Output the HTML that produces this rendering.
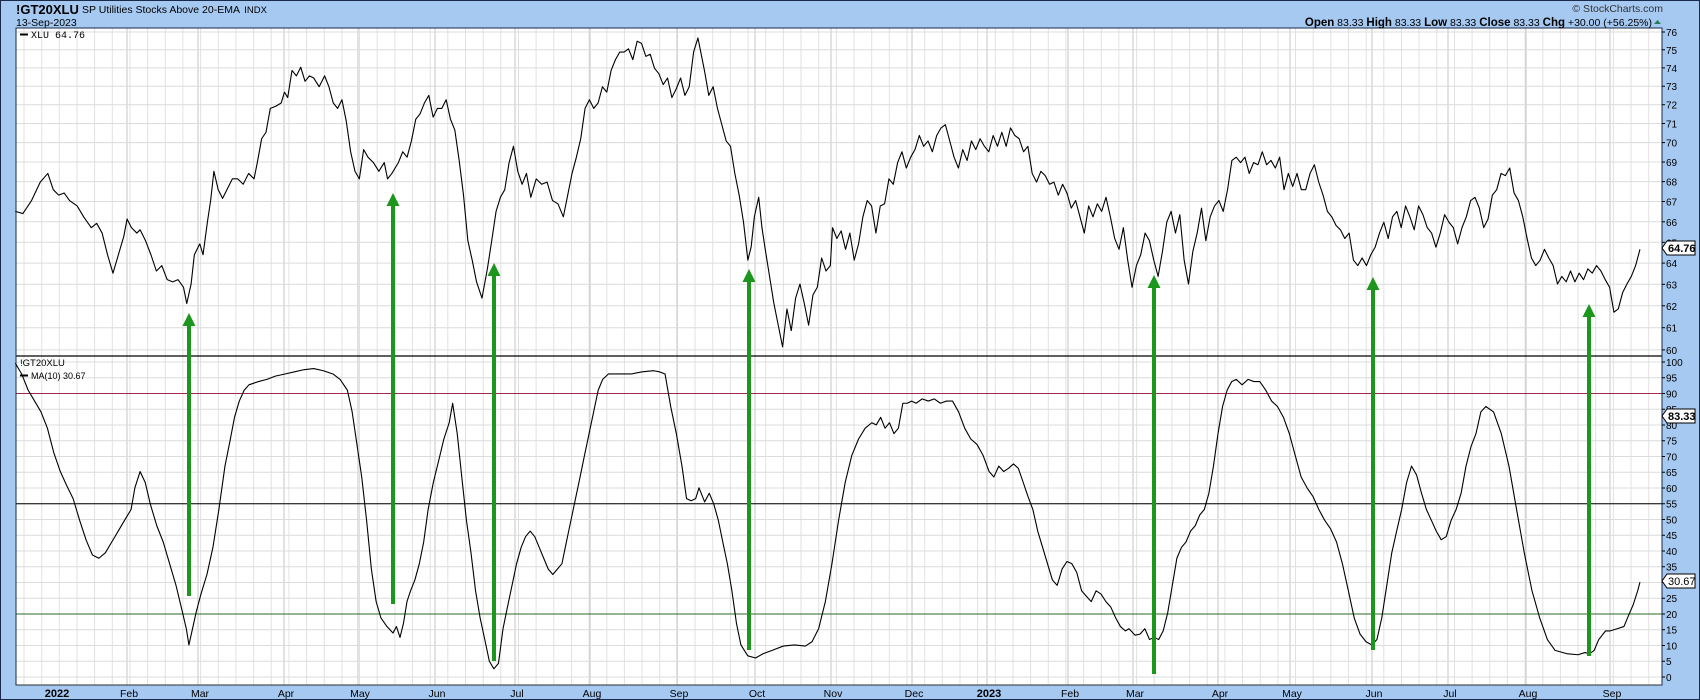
<!DOCTYPE html>
<html><head><meta charset="utf-8"><style>
html,body{margin:0;padding:0;background:#a6c9f2;}
svg{display:block;font-family:"Liberation Sans",Arial,sans-serif;}
</style></head><body>
<svg id="s" width="1700" height="700" viewBox="0 0 1700 700" xmlns="http://www.w3.org/2000/svg">
<rect x="0" y="0" width="1700" height="700" fill="#a6c9f2"/>
<rect x="0.5" y="0.5" width="1699" height="699" fill="none" stroke="#1a2a4a" stroke-width="1"/>
<rect x="16" y="28" width="1646" height="657" fill="#ffffff"/>
<g id="grid"></g>
<line x1="16" y1="356" x2="1662" y2="356" stroke="#000" stroke-width="1.2"/>
<line x1="16" y1="393.5" x2="1662" y2="393.5" stroke="#a0284c" stroke-width="1"/>
<line x1="16" y1="503.75" x2="1662" y2="503.75" stroke="#000" stroke-width="1"/>
<line x1="16" y1="614" x2="1662" y2="614" stroke="#2a6a2a" stroke-width="1"/>
<rect x="16" y="28" width="1646" height="657" fill="none" stroke="#1a2a4a" stroke-width="1"/>
<line x1="16" y1="685" x2="1662" y2="685" stroke="#333" stroke-width="1" stroke-dasharray="1,1"/>

<g transform="matrix(1.0853 0 0 1.084 -1 0)" fill="none" stroke="#000" stroke-width="1.1" stroke-linejoin="round">
<polyline vector-effect="non-scaling-stroke" points="15,195 22,197 30,185 38,168 45,160 50,175 55,180 60,178 65,185 72,190 78,200 85,210 90,206 95,215 100,235 105,252 110,235 115,218 118,202 122,210 127,215 130,212 135,222 140,235 145,250 150,245 155,258 160,260 165,258 170,265 173,280 177,262 180,235 185,225 188,235 192,205 195,185 198,158 202,175 206,183 210,175 215,165 220,165 225,170 230,160 235,165 238,150 242,128 246,122 250,100 255,98 260,95 263,85 266,90 270,65 274,70 278,62 282,75 286,70 290,72 295,80 300,70 304,80 308,95 312,100 316,92 320,112 324,140 328,158 332,165 336,138 340,145 345,150 350,158 355,150 358,165 362,160 368,150 372,140 376,145 380,130 384,110 388,105 392,95 396,88 400,108 404,100 408,100 412,92 416,110 420,120 424,148 428,180 432,222 436,240 440,260 445,275 450,248 454,222 458,195 462,182 466,175 470,150 474,135 478,158 482,170 486,160 490,182 495,165 500,170 505,168 510,185 515,188 520,200 524,180 528,160 532,145 536,128 540,100 544,92 548,100 552,95 556,80 560,85 564,65 568,55 572,48 576,48 580,45 584,55 588,38 592,40 596,52 600,50 604,63 608,68 612,78 616,72 620,90 624,82 628,72 632,88 636,80 640,48 644,35 646,45 650,65 654,88 658,80 662,100 666,115 670,130 674,135 678,160 682,180 686,205 690,240 693,228 696,200 700,182 703,210 706,230 710,255 714,280 718,300 722,320 726,285 730,305 734,275 738,262 742,280 746,300 750,272 754,265 758,238 762,250 766,245 768,210 772,220 776,213 780,230 784,215 788,240 792,225 796,200 800,185 804,190 808,215 812,190 816,188 820,165 824,170 828,150 832,140 836,155 840,145 844,138 848,125 852,135 856,130 860,140 864,125 868,118 872,115 876,130 880,145 884,155 888,138 892,148 896,130 900,138 904,128 908,135 912,140 916,125 920,135 924,122 928,135 932,118 936,125 940,128 944,140 948,135 952,160 956,168 960,158 964,162 968,170 972,168 976,180 980,170 984,178 988,192 992,185 996,200 1000,215 1004,190 1008,200 1012,188 1016,195 1020,182 1024,200 1028,220 1032,230 1036,210 1040,240 1044,265 1048,245 1052,235 1056,215 1060,222 1064,240 1068,255 1072,232 1076,205 1080,195 1084,215 1088,198 1092,240 1096,262 1100,232 1104,215 1108,192 1112,222 1116,200 1120,190 1124,185 1128,195 1132,175 1136,148 1140,145 1144,150 1148,145 1152,160 1156,150 1160,152 1164,140 1168,152 1172,148 1176,155 1180,145 1184,175 1188,160 1192,172 1196,160 1200,175 1204,175 1208,160 1212,152 1216,168 1220,180 1224,195 1228,200 1232,208 1236,212 1240,220 1244,215 1248,240 1252,245 1256,238 1260,245 1264,235 1268,228 1272,215 1276,205 1280,220 1284,200 1288,195 1292,210 1296,190 1300,200 1304,212 1308,190 1312,198 1316,210 1320,215 1324,228 1328,215 1332,198 1336,205 1340,210 1344,225 1348,210 1352,200 1356,185 1360,182 1364,192 1368,210 1372,202 1376,180 1380,175 1384,160 1388,162 1392,155 1396,178 1400,185 1404,200 1408,220 1412,238 1416,245 1420,240 1424,230 1428,238 1432,245 1436,262 1440,255 1444,260 1448,250 1452,260 1456,252 1460,258 1464,248 1468,252 1472,245 1476,250 1480,258 1484,265 1488,288 1492,285 1496,270 1500,262 1504,255 1508,245 1512,230"/>
<polyline id="ma" vector-effect="non-scaling-stroke" points="15,335 20,345 25,360 30,370 35,380 40,395 45,418 50,435 55,448 60,460 65,480 70,498 75,512 80,515 85,510 90,500 95,490 100,480 105,470 108,450 112,435 116,445 120,465 125,485 130,500 135,520 140,540 145,565 148,580 150,595 153,580 156,565 160,548 165,530 170,505 175,470 180,430 184,408 188,385 192,370 196,360 200,355 208,352 215,350 222,347 230,345 238,343 246,341 254,340 262,342 270,345 276,350 282,360 286,380 290,410 294,440 298,480 302,525 306,555 310,570 315,578 320,584 324,578 328,588 332,575 336,555 340,545 345,535 350,520 355,500 360,470 366,445 372,425 378,405 384,390 388,372 392,400 396,440 400,480 404,510 408,545 412,570 416,590 420,610 424,617 428,612 432,580 436,560 440,540 444,520 448,505 452,495 456,490 460,495 464,505 468,515 472,525 476,530 480,525 484,520 488,500 492,480 496,460 500,440 504,420 508,400 512,380 516,360 520,350 525,345 535,345 545,345 555,343 565,342 570,343 575,345 580,375 585,400 590,430 594,460 598,462 602,460 605,450 610,463 614,455 618,465 622,480 626,500 630,520 634,545 638,575 642,595 648,605 655,607 662,603 670,600 680,596 690,595 700,596 706,592 712,580 718,555 724,520 730,480 736,445 742,420 748,405 754,395 760,390 764,392 768,385 772,395 776,390 780,400 784,395 788,372 792,372 796,370 800,372 805,368 810,370 815,368 820,372 825,370 830,370 835,380 840,395 845,405 850,410 855,420 860,435 864,440 868,430 872,435 876,432 880,428 884,432 888,445 892,458 896,470 900,490 904,505 908,520 912,535 916,540 920,525 924,518 928,520 932,528 936,545 940,550 944,555 948,545 952,548 956,555 960,560 964,570 968,578 972,582 975,580 980,586 984,585 988,580 992,590 996,588 1000,590 1004,582 1008,565 1012,540 1016,515 1020,505 1024,500 1028,490 1032,485 1036,475 1040,470 1044,455 1048,430 1052,400 1056,375 1060,360 1064,352 1068,350 1072,355 1076,350 1080,352 1084,352 1088,360 1092,370 1096,375 1100,385 1104,400 1108,420 1112,440 1116,450 1120,458 1124,470 1128,480 1132,488 1136,500 1140,520 1144,545 1148,570 1152,585 1156,592 1160,595 1164,590 1168,570 1172,540 1176,510 1180,490 1184,470 1188,445 1192,430 1196,438 1200,455 1204,470 1208,480 1212,490 1216,498 1220,495 1224,480 1228,470 1232,455 1236,430 1240,412 1244,400 1248,380 1252,375 1256,380 1260,400 1264,430 1268,470 1272,510 1276,545 1280,570 1284,590 1288,600 1294,603 1300,604 1306,602 1310,603 1314,600 1318,590 1324,582 1328,582 1334,580 1340,578 1344,568 1348,558 1352,545 1354,537"/>
</g>

<g fill="#1c961c" stroke="#1c961c">
<line x1="189" y1="596" x2="189" y2="322" stroke-width="4"/><polygon stroke="none" points="182.5,326 195.5,326 189,313"/>
<line x1="393" y1="604" x2="393" y2="202" stroke-width="4"/><polygon stroke="none" points="386.5,206 399.5,206 393,193"/>
<line x1="494" y1="661" x2="494" y2="272" stroke-width="4"/><polygon stroke="none" points="487.5,276 500.5,276 494,263"/>
<line x1="749" y1="650" x2="749" y2="278" stroke-width="4"/><polygon stroke="none" points="742.5,282 755.5,282 749,269"/>
<line x1="1154" y1="674" x2="1154" y2="284" stroke-width="4"/><polygon stroke="none" points="1147.5,288 1160.5,288 1154,275"/>
<line x1="1373" y1="650" x2="1373" y2="286" stroke-width="4"/><polygon stroke="none" points="1366.5,290 1379.5,290 1373,277"/>
<line x1="1589" y1="656" x2="1589" y2="313" stroke-width="4"/><polygon stroke="none" points="1582.5,317 1595.5,317 1589,304"/>
</g>

<text x="16" y="14" font-size="13" font-weight="bold" fill="#000">!GT20XLU</text>
<text x="82" y="13" font-size="10.5" fill="#000">SP Utilities Stocks Above 20-EMA <tspan font-size="9.5" dx="2">INDX</tspan></text>
<text x="16" y="26" font-size="10.5" fill="#000">13-Sep-2023</text>
<text x="1663" y="12" font-size="10.5" fill="#333" text-anchor="end">© StockCharts.com</text>
<text x="1652" y="26" font-size="10.5" fill="#000" text-anchor="end"><tspan font-weight="bold" font-size="11.5">Open</tspan> 83.33  <tspan font-weight="bold" font-size="11.5">High</tspan> 83.33  <tspan font-weight="bold" font-size="11.5">Low</tspan> 83.33  <tspan font-weight="bold" font-size="11.5">Close</tspan> 83.33  <tspan font-weight="bold" font-size="11.5">Chg</tspan> +30.00 (+56.25%)</text>
<polygon points="1654,24 1661,24 1657.5,20" fill="#2a7a5a"/>
<line x1="20" y1="34.5" x2="28" y2="34.5" stroke="#000" stroke-width="2"/>
<text x="31" y="38" font-size="10" fill="#000" font-family="Liberation Mono, monospace">XLU 64.76</text>
<text x="20" y="366" font-size="9.5" fill="#000">!GT20XLU</text>
<line x1="20" y1="375.5" x2="28" y2="375.5" stroke="#000" stroke-width="2"/>
<text x="31" y="379" font-size="9" fill="#000">MA(10) 30.67</text>

<g font-size="10" fill="#000">
<text x="1666" y="36">76</text><text x="1666" y="53.8">75</text><text x="1666" y="71.9">74</text><text x="1666" y="90.2">73</text><text x="1666" y="108.7">72</text><text x="1666" y="127.5">71</text><text x="1666" y="146.6">70</text><text x="1666" y="166">69</text><text x="1666" y="185.6">68</text><text x="1666" y="205.5">67</text><text x="1666" y="225.8">66</text><text x="1666" y="246.3">65</text><text x="1666" y="267.2">64</text><text x="1666" y="288.3">63</text><text x="1666" y="309.8">62</text><text x="1666" y="331.6">61</text><text x="1666" y="354">60</text>
<text x="1666" y="366">100</text><text x="1666" y="381.7">95</text><text x="1666" y="397.5">90</text><text x="1666" y="413.2">85</text><text x="1666" y="429">80</text><text x="1666" y="444.7">75</text><text x="1666" y="460.5">70</text><text x="1666" y="476.2">65</text><text x="1666" y="492">60</text><text x="1666" y="507.7">55</text><text x="1666" y="523.5">50</text><text x="1666" y="539.2">45</text><text x="1666" y="555">40</text><text x="1666" y="570.7">35</text><text x="1666" y="586.5">30</text><text x="1666" y="602.2">25</text><text x="1666" y="618">20</text><text x="1666" y="633.7">15</text><text x="1666" y="649.5">10</text><text x="1666" y="665.2">5</text><text x="1666" y="681">0</text>
</g>
<g id="ticks"></g>

<polygon points="1662,248 1667,241 1695,241 1695,255 1667,255" fill="#fff" stroke="#000"/>
<text x="1668" y="252" font-size="11" font-weight="bold">64.76</text>
<polygon points="1662,416 1667,409 1695,409 1695,423 1667,423" fill="#fff" stroke="#000"/>
<text x="1668" y="420" font-size="11" font-weight="bold">83.33</text>
<polygon points="1662,581 1667,574 1695,574 1695,588 1667,588" fill="#fff" stroke="#000"/>
<text x="1668" y="585" font-size="11">30.67</text>

<g font-size="10.5" fill="#000" text-anchor="middle">
<text x="57" y="697" font-weight="bold" font-size="11">2022</text><text x="129" y="697">Feb</text><text x="200" y="697">Mar</text><text x="286" y="697">Apr</text><text x="360" y="697">May</text><text x="437" y="697">Jun</text><text x="517" y="697">Jul</text><text x="592" y="697">Aug</text><text x="679" y="697">Sep</text><text x="757" y="697">Oct</text><text x="833" y="697">Nov</text><text x="914" y="697">Dec</text><text x="989" y="697" font-weight="bold" font-size="11">2023</text><text x="1070" y="697">Feb</text><text x="1135" y="697">Mar</text><text x="1220" y="697">Apr</text><text x="1292" y="697">May</text><text x="1374" y="697">Jun</text><text x="1450" y="697">Jul</text><text x="1528" y="697">Aug</text><text x="1612" y="697">Sep</text>
</g>
</svg>
<script>
(function(){
var NS="http://www.w3.org/2000/svg",g=document.getElementById("grid"),t=document.getElementById("ticks");
function L(p,x1,y1,x2,y2,c,w){var l=document.createElementNS(NS,"line");l.setAttribute("x1",x1);l.setAttribute("y1",y1);l.setAttribute("x2",x2);l.setAttribute("y2",y2);l.setAttribute("stroke",c);l.setAttribute("stroke-width",w||1);p.appendChild(l);}
for(var x=24;x<1662;x+=17.66){L(g,x.toFixed(1),28,x.toFixed(1),685,"#e2e2e2");}
[127,198,284,358,435,515,590,677,755,831,912,987,1068,1133,1218,1290,1372,1448,1526,1610].forEach(function(x){L(g,x,28,x,685,"#c4c4c4");});
for(var v=60;v<=76;v++){var y=32+1345*Math.log(76/v);L(g,16,y.toFixed(1),1662,y.toFixed(1),"#dcdcdc");L(t,1662,y.toFixed(1),1665,y.toFixed(1),"#000");}
for(var v=0;v<=100;v+=5){var y=677-3.15*v;L(g,16,y,1662,y,"#dcdcdc");L(t,1662,y,1665,y,"#000");}
// remap MA x coordinates
var A=[[15,15],[150,175],[320,363],[388,418],[424,456],[650,692],[800,845],[990,1058],[1068,1140],[1160,1265],[1252,1370],[1300,1455],[1354,1512]];
function M(x){for(var i=0;i<A.length-1;i++){if(x<=A[i+1][0]){var a=A[i],b=A[i+1];return a[1]+(x-a[0])*(b[1]-a[1])/(b[0]-a[0]);}}return x;}
var pl=document.getElementById("ma");
var pts=pl.getAttribute("points").trim().split(/\s+/).map(function(p){var q=p.split(",");return M(+q[0]).toFixed(1)+","+q[1];});
pl.setAttribute("points",pts.join(" "));
})();
</script>
</body></html>
